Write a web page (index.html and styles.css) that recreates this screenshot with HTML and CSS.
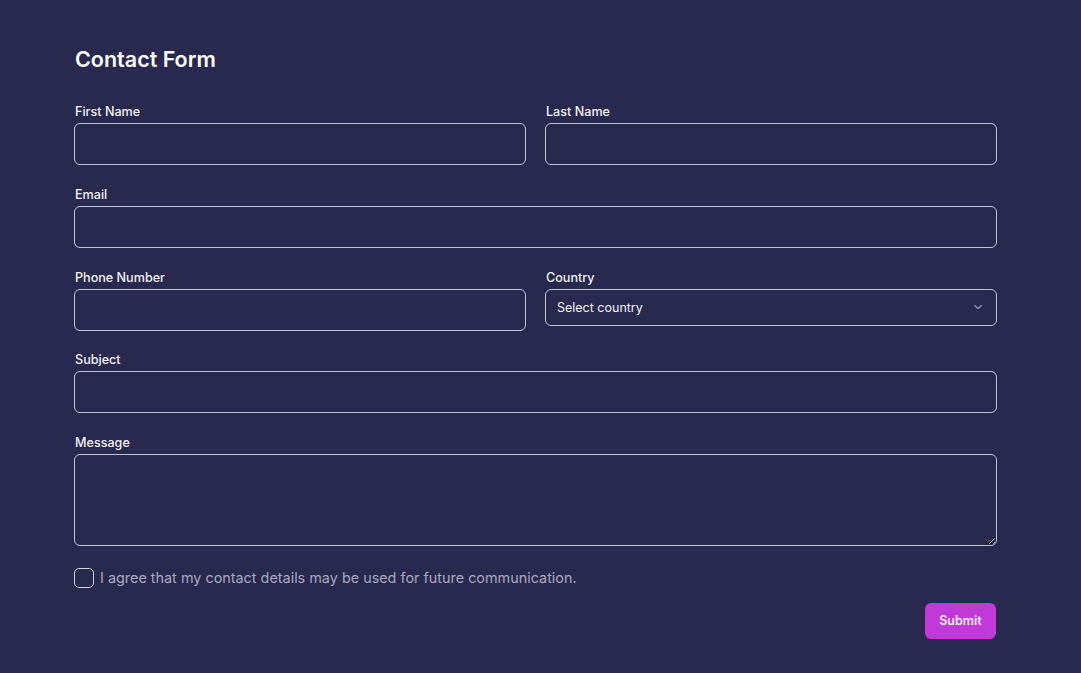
FILE: index.html
```html
<!DOCTYPE html>
<html lang="en">
<head>
<meta charset="utf-8">
<title>Contact Form</title>
<link rel="stylesheet" href="styles.css">
</head>
<body>
<main class="page">
  <h1 class="title">Contact Form</h1>
  <form class="form">
    <div class="row two">
      <div class="field">
        <label class="label">First Name</label>
        <input class="input" type="text">
      </div>
      <div class="field">
        <label class="label">Last Name</label>
        <input class="input" type="text">
      </div>
    </div>
    <div class="field">
      <label class="label">Email</label>
      <input class="input" type="email">
    </div>
    <div class="row two">
      <div class="field">
        <label class="label">Phone Number</label>
        <input class="input" type="tel">
      </div>
      <div class="field">
        <label class="label">Country</label>
        <div class="select">
          <span class="select-text">Select country</span>
          <svg class="chev" width="10" height="10" viewBox="0 0 10 10"><path d="M1.5 3.5 L5 6.5 L8.5 3.5" fill="none" stroke="#9a9ab4" stroke-width="1.1" stroke-linecap="round" stroke-linejoin="round"/></svg>
        </div>
      </div>
    </div>
    <div class="field">
      <label class="label">Subject</label>
      <input class="input" type="text">
    </div>
    <div class="field">
      <label class="label">Message</label>
      <textarea class="input textarea"></textarea>
    </div>
    <div class="agree">
      <span class="check"></span>
      <span class="agree-text">I agree that my contact details may be used for future communication.</span>
    </div>
    <div class="actions">
      <button type="button" class="submit">Submit</button>
    </div>
  </form>
</main>
</body>
</html>
```
FILE: styles.css
```css
* { box-sizing: border-box; }
html, body { margin: 0; padding: 0; }
body {
  background: #29284f;
  font-family: Inter, "Noto Sans", sans-serif;
  color: #f2f2f7;
  height: 673px;
  overflow: hidden;
}
.page {
  width: 923px;
  margin-left: 74px;
  padding-top: 45px;
}
.title {
  margin: 0 0 30px 0;
  font-size: 21.5px;
  line-height: 28px;
  font-weight: 600;
  color: #ffffff;
  padding-left: 1px;
}
.form {
  display: flex;
  flex-direction: column;
  gap: 20.75px;
}
.row.two {
  display: grid;
  grid-template-columns: 1fr 1fr;
  column-gap: 19px;
}
.field {
  display: flex;
  flex-direction: column;
  align-items: stretch;
}
.label {
  font-size: 12.6px;
  line-height: 16px;
  font-weight: 500;
  padding-top: 1px;
  margin-bottom: 3px;
  padding-left: 1px;
  color: #f2f2f7;
}
.input {
  height: 42px;
  background: transparent;
  border: 1px solid #c4c4d4;
  border-radius: 6px;
  outline: none;
  color: #fff;
  font-family: inherit;
  font-size: 13px;
  padding: 0 12px;
  width: 100%;
}
.textarea {
  height: 92px;
  resize: vertical;
  padding: 8px 12px;
  display: block;
}
.select {
  height: 37px;
  border: 1px solid #c4c4d4;
  border-radius: 6px;
  display: flex;
  align-items: center;
  justify-content: space-between;
  padding: 0 13px 0 11px;
}
.select-text {
  font-size: 12.5px;
  color: #f2f2f7;
}
.chev { display: block; }
.agree {
  display: flex;
  align-items: center;
  gap: 6px;
  margin-top: 1px;
}
.check {
  width: 20px;
  height: 20px;
  border: 1px solid #d0d0dc;
  border-radius: 5px;
  display: block;
}
.agree-text {
  font-size: 14.4px;
  color: #a8a8c0;
}
.actions {
  display: flex;
  justify-content: flex-end;
  margin-top: -6px;
}
.submit {
  width: 71px;
  height: 36px;
  border: none;
  border-radius: 6px;
  background: #c13ad9;
  color: #fbe9ff;
  font-family: inherit;
  font-size: 12.5px;
  font-weight: 600;
  margin-right: 1px;
}
```
